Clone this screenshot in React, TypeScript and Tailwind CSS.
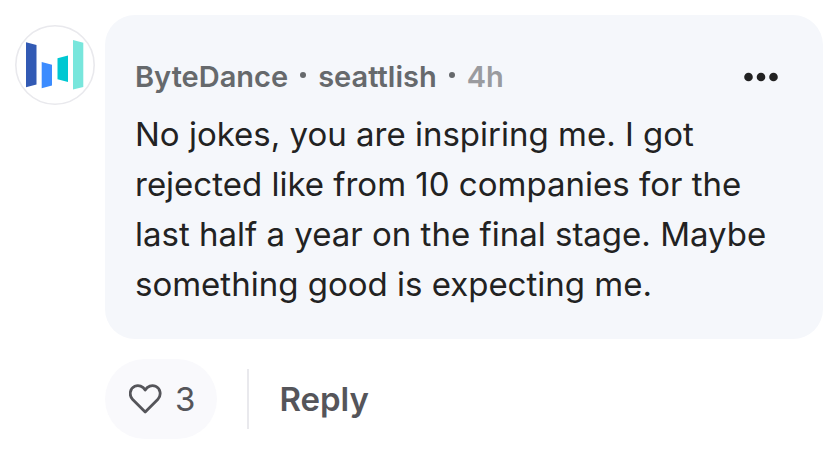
import React from "react";

interface Comment {
    company: string;
    author: string;
    age: string;
    body: string;
    likes: number;
}

const comment: Comment = {
    company: "ByteDance",
    author: "seattlish",
    age: "4h",
    body: "No jokes, you are inspiring me. I got rejected like from 10 companies for the last half a year on the final stage. Maybe something good is expecting me.",
    likes: 3,
};

const CompanyLogo: React.FC = () => (
    <svg viewBox="0 0 80 80" className="size-full" role="img" aria-label="ByteDance logo">
        <circle cx="40" cy="40" r="39.2" fill="#fff" stroke="#e9e9ed" strokeWidth="1.6" />
        <path d="M11 17.3 21.5 20v39.6L11 62.3z" fill="#325ab4" />
        <path d="M26.7 37 37 39.7v20.9l-10.3 2.7z" fill="#3c8cff" />
        <path d="M42.5 33.3 53 30.6v26.3l-10.5-2.7z" fill="#00c8d2" />
        <path d="M58 15l10.3 2.7v44.2L58 64.6z" fill="#78e6dc" />
    </svg>
);

const MoreIcon: React.FC = () => (
    <svg viewBox="0 0 34 10" className="w-[34px] h-[10px]" fill="#222" aria-hidden="true">
        <circle cx="4.5" cy="5" r="4.3" />
        <circle cx="17" cy="5" r="4.3" />
        <circle cx="29.5" cy="5" r="4.3" />
    </svg>
);

const HeartIcon: React.FC = () => (
    <svg
        viewBox="0 0 34 30"
        className="w-[34px] h-[30px]"
        fill="none"
        stroke="#55555a"
        strokeWidth="2.8"
        strokeLinejoin="round"
        aria-hidden="true"
    >
        <path d="M16.2 28 3.7 15.6C-.4 11.2.9 4.4 5.8 2.3c3.8-1.6 8.2-.1 10.4 3.7 2.2-3.8 6.6-5.3 10.4-3.7 4.9 2.1 6.2 8.9 2.1 13.3z" />
    </svg>
);

const Dot: React.FC = () => <span className="size-1.5 mx-3 mb-1 rounded-full bg-[#66696c]" />;

const App: React.FC = () => {
    return (
        <main className="flex gap-2.5 pl-[15px] pr-3 py-[15px] bg-white font-['Inter',sans-serif]">
            <div className="size-20 mt-2.5 shrink-0">
                <CompanyLogo />
            </div>

            <div className="flex-1 flex flex-col gap-5">
                <article className="bg-[#f5f7fb] rounded-[30px] p-[30px]">
                    <header className="flex items-center justify-between h-16 pr-[15px] text-[29px] font-semibold text-[#66696c]">
                        <div className="flex items-center">
                            <a href="#company">{comment.company}</a>
                            <Dot />
                            <a href="#author">{comment.author}</a>
                            <Dot />
                            <span className="text-[#9a9b9f]">{comment.age}</span>
                        </div>
                        <button aria-label="More options" className="cursor-pointer">
                            <MoreIcon />
                        </button>
                    </header>
                    <p className="text-[33px] leading-[50px] text-[#222]">{comment.body}</p>
                </article>

                {/* Actions */}
                <div className="flex items-center text-[33px] leading-[50px] text-[#55555a]">
                    <button
                        aria-label={`Like, ${comment.likes} likes`}
                        className="flex items-center gap-3 h-20 pl-6 pr-[22px] rounded-full bg-[#f9f9fc] cursor-pointer"
                    >
                        <HeartIcon />
                        <span>{comment.likes}</span>
                    </button>
                    <div className="w-0.5 h-[60px] mx-[30px] bg-[#e9e9ed]" />
                    <button className="font-semibold cursor-pointer">Reply</button>
                </div>
            </div>
        </main>
    );
};

export default App;
